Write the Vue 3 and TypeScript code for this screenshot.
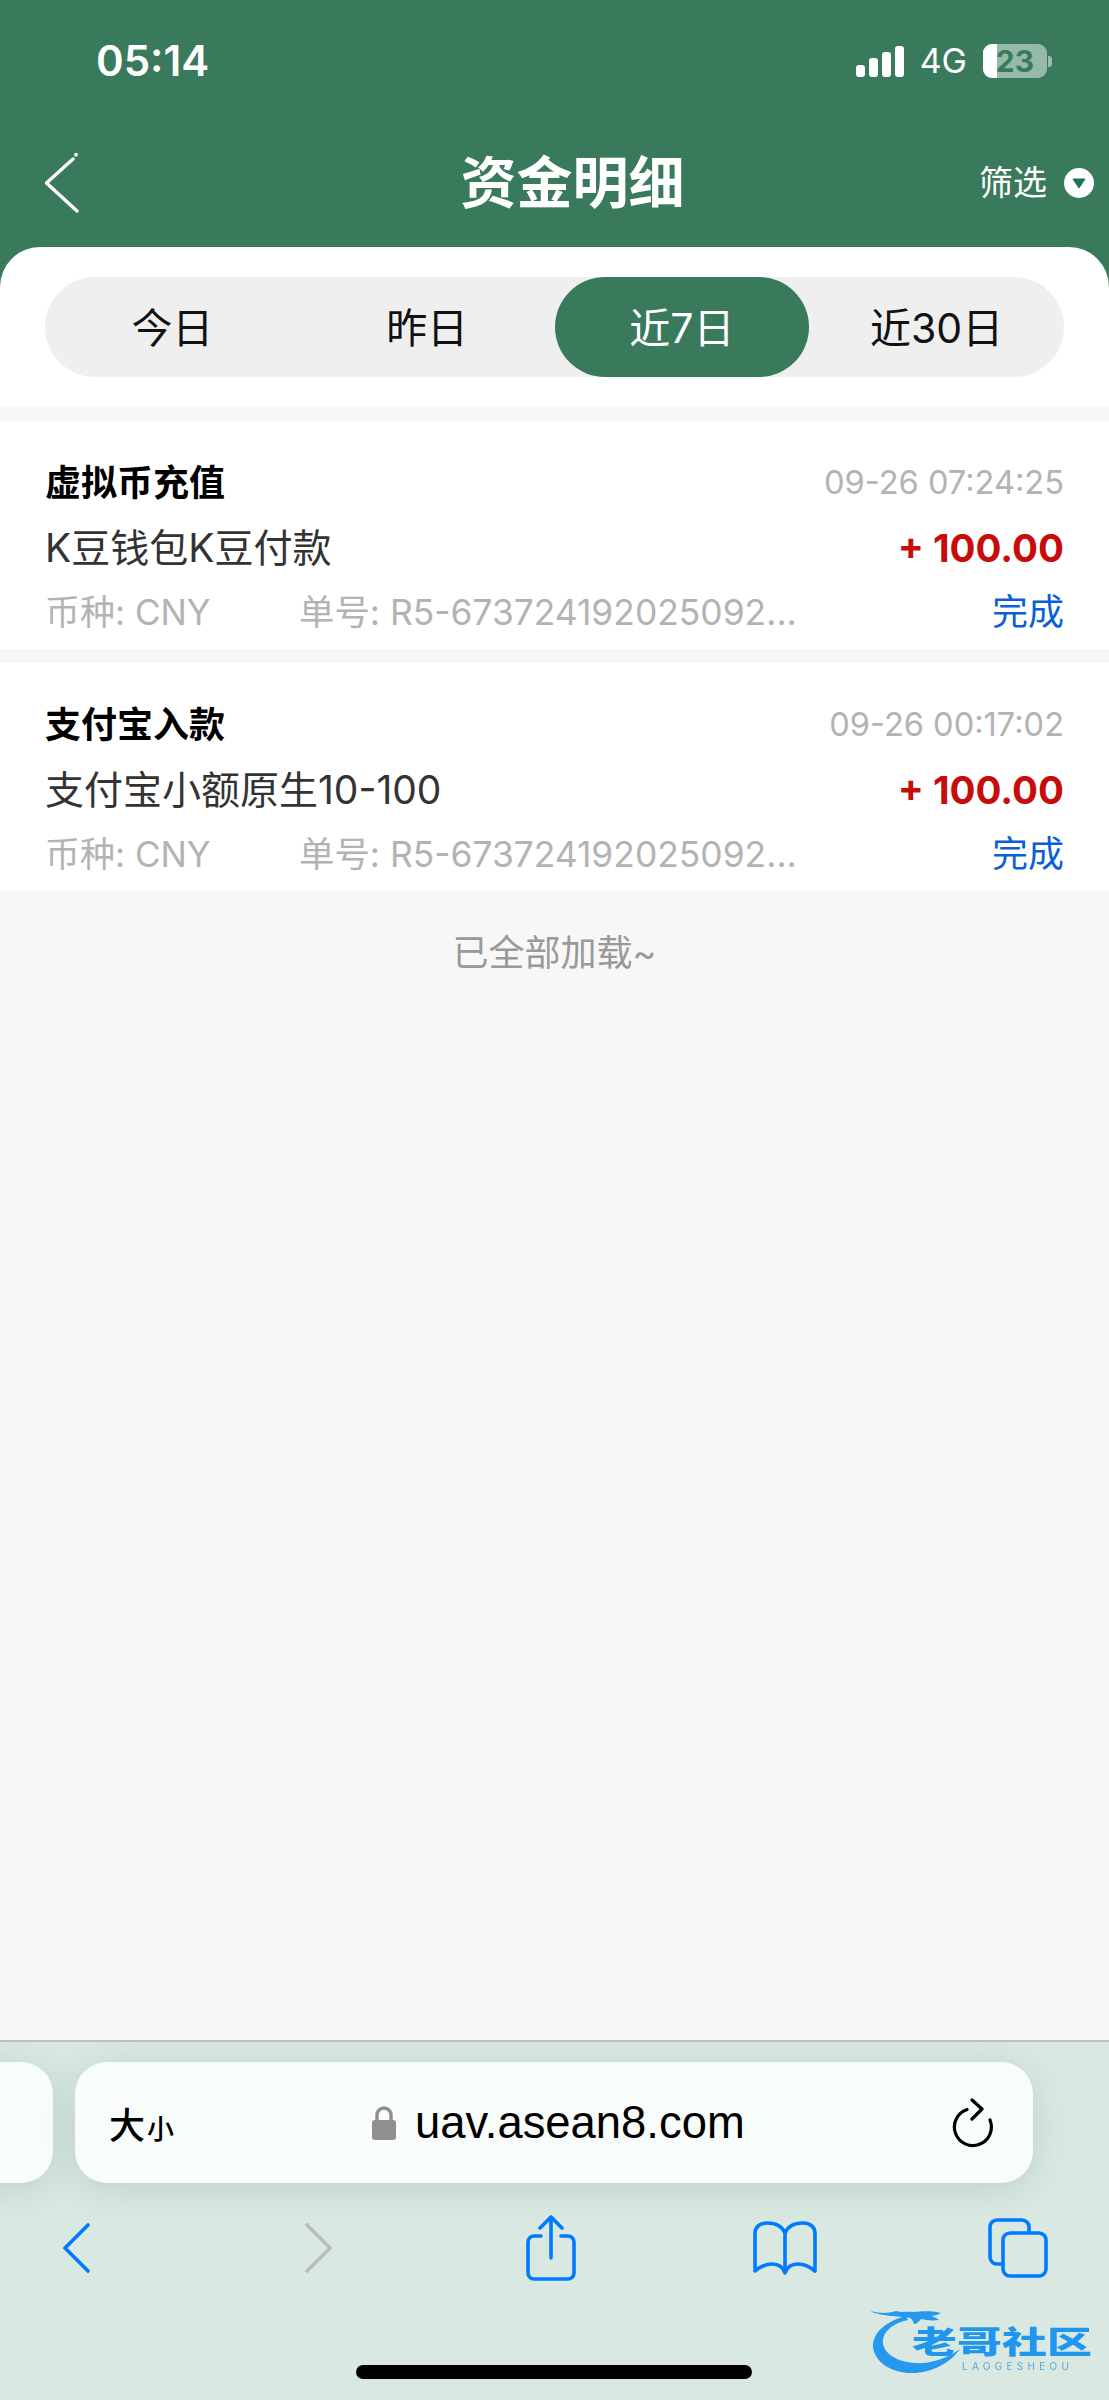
<template>
  <div class="page">
    <header class="top">
      <div class="status">
        <span class="time">05:14</span>
        <div class="status-right">
          <div class="signal"><i v-for="h in signalBars" :key="h" :style="{ height: h + 'px' }"></i></div>
          <span class="net">4G</span>
          <div class="battery">
            <div class="battery-body"><span class="battery-fill"></span><span class="battery-num">23</span></div>
            <span class="battery-nub"></span>
          </div>
        </div>
      </div>
      <div class="nav">
        <svg class="nav-back" width="34" height="60" viewBox="0 0 34 60" fill="none" stroke="#fff" stroke-width="3.4" stroke-linecap="round" stroke-linejoin="round">
          <path d="M28 6 1.500 30 32 58" />
          <path d="M31 1v1" />
        </svg>
        <h1 class="nav-title">资金明细</h1>
        <div class="nav-filter">
          <span>筛选</span>
          <svg width="30" height="30" viewBox="0 0 30 30">
            <circle cx="15" cy="15" r="15" fill="#fff" />
            <path d="M9 11h12l-6 9z" fill="#18765a" stroke="#18765a" stroke-linejoin="round" />
          </svg>
        </div>
      </div>
    </header>

    <section class="panel">
      <div class="tabs">
        <div v-for="tab in tabs" :key="tab" class="tab" :class="{ active: tab === activeTab }">{{ tab }}</div>
      </div>
    </section>

    <main class="list">
      <article v-for="item in records" :key="item.time" class="record">
        <div class="row row-title">
          <span class="name">{{ item.name }}</span>
          <span class="stamp">{{ item.time }}</span>
        </div>
        <div class="row row-channel">
          <span class="channel">{{ item.channel }}</span>
          <span class="amount">+ 100.00</span>
        </div>
        <div class="row row-meta">
          <span class="currency">币种: CNY</span>
          <span class="order">单号: R5-673724192025092...</span>
          <span class="state">完成</span>
        </div>
      </article>
      <p class="loaded">已全部加载~</p>
    </main>

    <footer class="browser">
      <div class="address-row">
        <div class="address-stub"></div>
        <div class="address">
          <span class="aa"><b>大</b><small>小</small></span>
          <div class="url">
            <svg width="24" height="34" viewBox="0 0 24 34">
              <path d="M5 15V9a7 7 0 0 1 14 0v6" fill="none" stroke="#8e8e93" stroke-width="3.4" />
              <rect y="14" width="24" height="20" rx="3" fill="#8e8e93" />
            </svg>
            <span>uav.asean8.com</span>
          </div>
          <svg class="reload" width="42" height="50" viewBox="0 0 42 50" fill="none" stroke="#000" stroke-width="3.2" stroke-linecap="round" stroke-linejoin="round">
            <path d="M15 11.500A18.500 18.500 0 1 0 38 22" />
            <path d="M20 2 30 11 20 21" />
          </svg>
        </div>
      </div>

      <nav class="tools">
        <svg class="tool-back" width="28" height="50" viewBox="0 0 28 50" fill="none" stroke="#007aff" stroke-width="3.6" stroke-linecap="round" stroke-linejoin="round">
          <path d="M25 2 2 25l23 23" />
        </svg>
        <svg class="tool-forward" width="28" height="50" viewBox="0 0 28 50" fill="none" stroke="#b8bdbb" stroke-width="3.6" stroke-linecap="round" stroke-linejoin="round">
          <path d="M3 2l23 23L3 48" />
        </svg>
        <svg class="tool-share" width="50" height="66" viewBox="0 0 50 66" fill="none" stroke="#007aff" stroke-width="3.6" stroke-linecap="round" stroke-linejoin="round">
          <path d="M15 21H8a6 6 0 0 0-6 6v31a6 6 0 0 0 6 6h34a6 6 0 0 0 6-6V27a6 6 0 0 0-6-6h-7" />
          <path d="M25 43V2M14 13 25 2l11 11" />
        </svg>
        <svg class="tool-book" width="64" height="54" viewBox="0 0 64 54" fill="none" stroke="#007aff" stroke-width="3.6" stroke-linecap="round" stroke-linejoin="round">
          <path d="M32 12C29 5 22 2 14 2 7 2 2 6 2 12v38c6-5 11-7 17-7 6 0 11 3 13 9 2-6 7-9 13-9 6 0 11 2 17 7V12c0-6-5-10-12-10-8 0-15 3-18 10zM32 12v40" />
        </svg>
        <svg class="tool-pages" width="60" height="60" viewBox="0 0 60 60" fill="none" stroke="#007aff" stroke-width="3.6" stroke-linejoin="round">
          <path d="M15 46H9a7 7 0 0 1-7-7V9a7 7 0 0 1 7-7h25a7 7 0 0 1 7 7v6" />
          <rect x="15" y="15" width="43" height="43" rx="7" />
        </svg>
      </nav>

      <div class="home-bar"></div>

      <div class="watermark">
        <svg class="watermark-mark" width="100" height="72" viewBox="0 0 100 72">
          <path d="M36 9C13 15 2 28 3 40c2 16 19 26 39 26 20 0 38-10 48-24-14 10-30 15-45 14-17-1-31-9-32-20-1-10 9-20 25-23z" fill="#2698ee" />
          <path d="M0 4c12 3 20 2 26 0 6 2 12 0 18 1 9-1 21-1 27 1-3 2-7 3-10 3 3 1 6 2 8 4-7 1-13 0-18-1-2 3-5 5-7 5-1-3-2-5-4-6C28 9 10 9 0 4z" fill="#2698ee" />
        </svg>
        <span class="watermark-name">老哥社区</span>
        <span class="watermark-sub">LAOGESHEOU</span>
      </div>
    </footer>
  </div>
</template>

<script setup lang="ts">
interface FundRecord {
  name: string
  time: string
  channel: string
}

const signalBars = [12, 19, 25, 31]
const tabs = ['今日', '昨日', '近7日', '近30日']
const activeTab = '近7日'

const records: FundRecord[] = [
  { name: '虚拟币充值', time: '09-26 07:24:25', channel: 'K豆钱包K豆付款' },
  { name: '支付宝入款', time: '09-26 00:17:02', channel: '支付宝小额原生10-100' }
]
</script>

<style>
html,
body {
  margin: 0;
  background: #f7f7f7;
}
</style>

<style scoped>
.page {
  width: 1109px;
  height: 2400px;
  display: flex;
  flex-direction: column;
  background: #397a5d;
  font-family: Inter, "Noto Sans CJK SC", sans-serif;
  overflow: hidden;
}

.top {
  height: 247px;
  flex: none;
  color: #fff;
  box-sizing: border-box;
}

.status {
  height: 122px;
  box-sizing: border-box;
  padding: 35px 57px 0 96px;
  display: flex;
  justify-content: space-between;
  align-items: flex-start;
}

.time {
  font-size: 42px;
  line-height: 52px;
  font-weight: 600;
}

.status-right {
  display: flex;
  align-items: center;
  height: 52px;
}

.signal {
  display: flex;
  align-items: flex-end;
  gap: 4px;
  height: 31px;
}

.signal i {
  width: 9px;
  border-radius: 3px;
  background: #fff;
}

.net {
  margin-left: 16px;
  font-size: 34px;
  font-weight: 400;
  line-height: 40px;
}

.battery {
  margin-left: 16px;
  display: flex;
  align-items: center;
}

.battery-body {
  position: relative;
  width: 64px;
  height: 34px;
  border-radius: 9px;
  background: rgba(255, 255, 255, 0.48);
  overflow: hidden;
  text-align: center;
}

.battery-fill {
  position: absolute;
  left: 0;
  top: 0;
  bottom: 0;
  width: 14px;
  background: #fff;
}

.battery-num {
  position: relative;
  font-size: 30px;
  line-height: 34px;
  font-weight: 700;
  color: #397a5d;
}

.battery-nub {
  width: 4px;
  height: 11px;
  margin-left: 1px;
  border-radius: 0 3px 3px 0;
  background: rgba(255, 255, 255, 0.5);
}

.nav {
  height: 125px;
  position: relative;
  display: flex;
  justify-content: center;
  align-items: flex-start;
  padding-left: 36px;
}

.nav-back {
  position: absolute;
  left: 45px;
  top: 31px;
}

.nav-title {
  margin: 30px 0 0;
  font-size: 56px;
  line-height: 62px;
  font-weight: 700;
}

.nav-filter {
  position: absolute;
  left: 979px;
  top: 42px;
  display: flex;
  align-items: center;
  gap: 17px;
  font-size: 34px;
  line-height: 38px;
}

.panel {
  flex: none;
  height: 159px;
  box-sizing: border-box;
  padding: 30px 45px 0;
  background: #fff;
  border-radius: 40px 40px 0 0;
}

.tabs {
  display: grid;
  grid-template-columns: repeat(4, 1fr);
  height: 100px;
  border-radius: 50px;
  background: #efefef;
}

.tab {
  display: flex;
  align-items: center;
  justify-content: center;
  box-sizing: border-box;
  padding-bottom: 5px;
  border-radius: 50px;
  font-size: 41px;
  color: #111;
}

.tab.active {
  background: #397a5d;
  color: #fff;
}

.list {
  flex: 1;
  background: #f7f7f7;
  padding-top: 15px;
}

.record {
  height: 228px;
  box-sizing: border-box;
  margin-bottom: 14px;
  padding: 34px 45px 0;
  background: #fff;
}

.record:nth-of-type(2) {
  margin-bottom: 0;
}

.row {
  display: flex;
  align-items: center;
  justify-content: space-between;
}

.row-title {
  height: 50px;
}

.row-channel {
  height: 50px;
  margin-top: 15px;
}

.row-meta {
  height: 50px;
  margin-top: 14px;
  justify-content: flex-start;
}

.name {
  font-size: 36px;
  font-weight: 700;
  color: #000;
}

.stamp {
  margin-top: 3px;
  font-size: 32.600px;
  color: #b3b3b3;
}

.channel {
  font-size: 39px;
  color: #333;
}

.amount {
  margin-top: 6px;
  font-size: 38.500px;
  font-weight: 700;
  color: #c80b0b;
}

.currency,
.order {
  font-size: 35px;
  color: #b3b3b3;
  white-space: nowrap;
}

.order {
  font-size: 35.400px;
}

.currency {
  width: 254px;
}

.state {
  margin-left: auto;
  font-size: 36px;
  color: #0a5fd8;
}

.loaded {
  margin: 37px 0 0;
  text-align: center;
  font-size: 36px;
  line-height: 50px;
  color: #999;
}

.browser {
  flex: none;
  position: relative;
  height: 360px;
  box-sizing: border-box;
  border-top: 2px solid #b9c4bf;
  background: #d9e9e2;
}

.address-row {
  display: flex;
  gap: 22px;
  margin: 20px 0 0 -60px;
}

.address-stub {
  width: 113px;
  height: 121px;
  flex: none;
  border-radius: 32px;
  background: #f8fcfa;
  box-shadow: 0 6px 34px rgba(60, 90, 75, 0.16);
}

.address {
  width: 958px;
  height: 121px;
  flex: none;
  box-sizing: border-box;
  padding: 0 39px 0 34px;
  display: flex;
  align-items: center;
  border-radius: 32px;
  background: #f8fcfa;
  box-shadow: 0 6px 34px rgba(60, 90, 75, 0.16);
}

.aa {
  display: flex;
  align-items: baseline;
  color: #000;
  width: 66px;
}

.aa b {
  font-size: 36px;
  font-weight: 500;
}

.aa small {
  margin-left: 2px;
  font-size: 27px;
  font-weight: 500;
}

.url {
  margin-left: 197px;
  display: flex;
  align-items: center;
  gap: 19px;
  font-family: "Liberation Sans", Arial, sans-serif;
  font-size: 45.400px;
  color: #000;
}

.reload {
  margin-left: auto;
}

.tools {
  display: flex;
  align-items: center;
  height: 100px;
  margin-top: 15px;
  padding-left: 63px;
}

.tool-forward {
  margin-left: 213px;
}

.tool-share {
  margin-left: 194px;
}

.tool-book {
  margin-left: 177px;
}

.tool-pages {
  margin-left: 171px;
}

.home-bar {
  position: absolute;
  left: 356px;
  top: 323px;
  width: 396px;
  height: 14px;
  border-radius: 7px;
  background: #000;
}

.watermark {
  position: absolute;
  left: 870px;
  top: 263px;
  width: 225px;
  height: 74px;
  filter: blur(0.5px);
}

.watermark-mark {
  position: absolute;
  left: 0;
  top: 2px;
}

.watermark-name {
  position: absolute;
  left: 42px;
  top: 14px;
  font-size: 45px;
  line-height: 46px;
  font-weight: 900;
  white-space: nowrap;
  color: #2196ee;
  transform: scaleY(0.68);
}

.watermark-sub {
  position: absolute;
  left: 92px;
  top: 55px;
  font-size: 10px;
  line-height: 12px;
  letter-spacing: 4.3px;
  white-space: nowrap;
  color: #5aa6da;
}
</style>
